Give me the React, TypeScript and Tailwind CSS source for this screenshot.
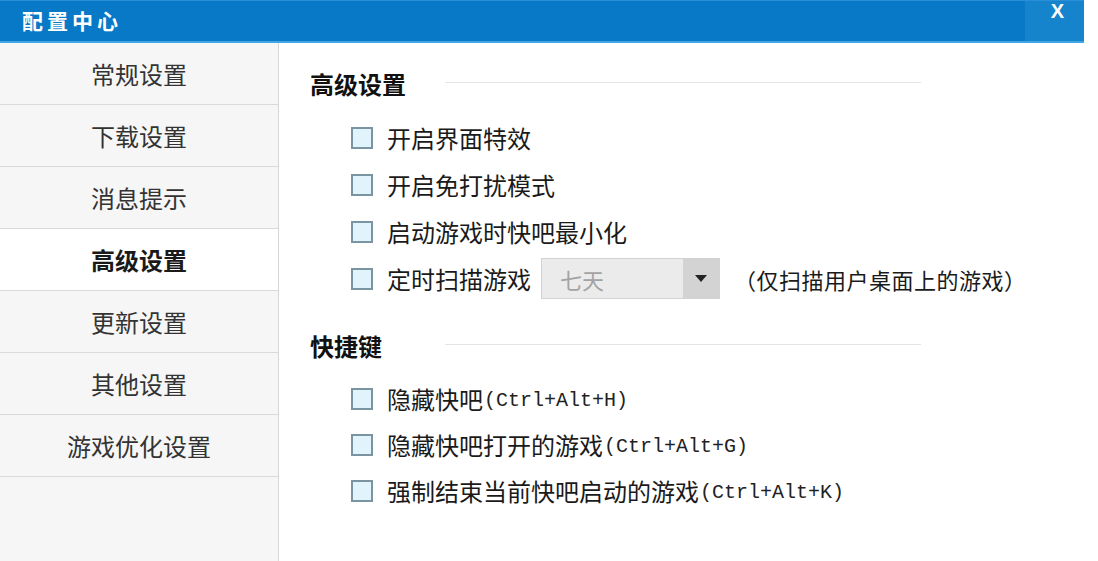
import React from 'react';

// 配置中心 - 高级设置页

const cjk = "font-['Noto_Sans_CJK_SC','Noto_Sans',sans-serif]";

const menu = ['常规设置', '下载设置', '消息提示', '高级设置', '更新设置', '其他设置', '游戏优化设置'];

const Checkbox: React.FC = () => (
  <span className="inline-block w-[22px] h-[22px] shrink-0 border-2 border-[#7b94a2] bg-[#e1f4fb]" />
);

// 标题 + 右侧细线（细线起点固定）
const SectionTitle: React.FC<{ text: string }> = ({ text }) => (
  <div className="flex items-center h-[30px]">
    <span className="w-[135px] text-[24px] leading-[30px] font-bold text-[#111]">{text}</span>
    <span className="w-[476px] h-px bg-[#e4e4e4] -mt-[4px]" />
  </div>
);

const Row: React.FC<{ h: string; children: React.ReactNode }> = ({ h, children }) => (
  <div className={`flex items-center ml-[41px] ${h}`}>
    <Checkbox />
    <div className="ml-[14px] flex items-center text-[24px] leading-none text-[#1a1a1a]">{children}</div>
  </div>
);

const Keys: React.FC<{ k: string }> = ({ k }) => (
  <span className="ml-[1px] mt-[4px] font-['Liberation_Mono',monospace] text-[20px] text-[#222]">(Ctrl+Alt+{k})</span>
);

const App: React.FC = () => {
  return (
    <div className={`w-[1098px] h-[561px] bg-white flex flex-col overflow-hidden ${cjk}`}>
      {/* 标题栏 */}
      <div className="w-[1084px] h-[43px] flex bg-[#0879c6] border-t border-[#2a8fd6] border-b-2 border-b-[#40a6e6]">
        <div className="flex-1 pl-[22px] flex items-center text-white font-bold text-[21px] tracking-[4px]">配置中心</div>
        <div className="w-[59px] bg-[#1684cd] flex justify-center">
          <span className="font-['Liberation_Sans',sans-serif] font-bold text-white text-[20px] leading-[22px] -mt-[1px] ml-[6px]">X</span>
        </div>
      </div>

      <div className="flex flex-1">
        {/* 左侧菜单 */}
        <div className="w-[279px] bg-[#f6f6f6] border-r border-[#d6d6d6] flex flex-col">
          {menu.map((m) => {
            const active = m === '高级设置';
            return (
              <div
                key={m}
                className={`h-[62px] border-b border-[#dadada] flex items-center justify-center text-[24px] ${
                  active ? 'bg-white font-bold text-[#1a1a1a]' : 'text-[#333]'
                }`}
              >
                {m}
              </div>
            );
          })}
        </div>

        {/* 右侧内容 */}
        <div className="flex-1 pl-[31px] pt-[26px] flex flex-col">
          <SectionTitle text="高级设置" />
          <div className="mt-[15px]">
            <Row h="h-[47px]">开启界面特效</Row>
            <Row h="h-[47px]">开启免打扰模式</Row>
            <Row h="h-[47px]">启动游戏时快吧最小化</Row>
            <Row h="h-[47px]">
              定时扫描游戏
              <div className="ml-[10px] w-[179px] h-[41px] flex border border-[#d2d2d2] bg-[#ebebeb]">
                <span className="flex-1 pl-[18px] flex items-center text-[22px] text-[#a3a3a3]">七天</span>
                <span className="w-[36px] bg-[#d3d3d3] flex items-center justify-center">
                  <svg width="12" height="7" viewBox="0 0 12 7"><path d="M0 0h12L6 7z" fill="#222" /></svg>
                </span>
              </div>
              <span className="ml-[14px] text-[22px] tracking-[0.5px]">（仅扫描用户桌面上的游戏）</span>
            </Row>
          </div>

          <div className="mt-[29px]">
            <SectionTitle text="快捷键" />
          </div>
          <div className="mt-[15px]">
            <Row h="h-[46px]">隐藏快吧<Keys k="H" /></Row>
            <Row h="h-[46px]">隐藏快吧打开的游戏<Keys k="G" /></Row>
            <Row h="h-[46px]">强制结束当前快吧启动的游戏<Keys k="K" /></Row>
          </div>
        </div>
      </div>
    </div>
  );
};

export default App;
